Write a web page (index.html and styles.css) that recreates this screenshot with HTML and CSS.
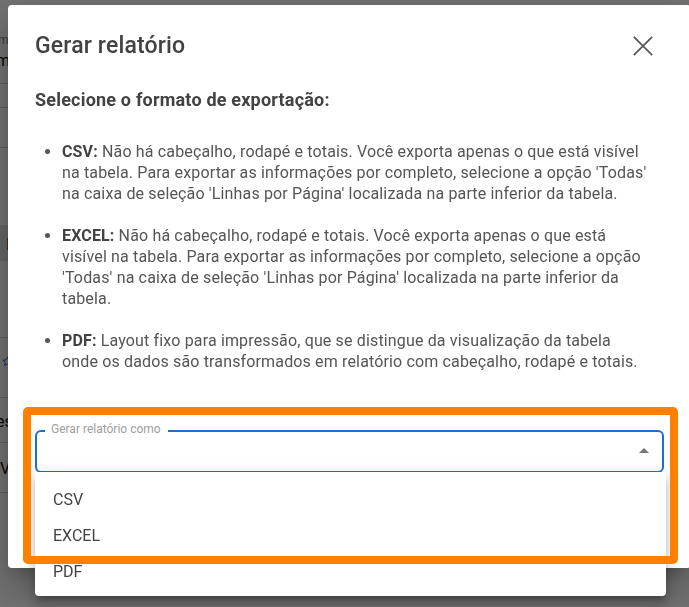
FILE: index.html
```html
<!DOCTYPE html>
<html lang="pt-BR">
<head>
<meta charset="utf-8">
<title>Gerar relatório</title>
<link rel="stylesheet" href="styles.css">
</head>
<body>
<div class="bg-page">
  <div class="bg-block bg-first">
    <span class="bg-caption">m</span>
    <span class="bg-value">m</span>
  </div>
  <div class="bg-block bg-row-24"></div>
  <div class="bg-block bg-row-40"></div>
  <div class="bg-block bg-gap-77"></div>
  <div class="bg-block bg-band"><span class="bg-value">I</span></div>
  <div class="bg-block bg-gap-77b"></div>
  <div class="bg-block bg-star-row">
    <svg class="bg-star" viewBox="0 0 24 24" width="11" height="11"><path d="M12 17.3l-6.2 3.7 1.6-7L2 9.2l7.2-.6L12 2l2.8 6.6 7.2.6-5.4 4.8 1.6 7z" fill="none" stroke="#1e63c6" stroke-width="2"/></svg>
  </div>
  <div class="bg-block bg-text-row"><span class="bg-value">es</span></div>
  <div class="bg-block bg-text-row2"><span class="bg-value">V</span></div>
</div>

<div class="backdrop"></div>

<div class="dialog" role="dialog" aria-labelledby="dlg-title">
  <header class="dialog-header">
    <h2 class="dialog-title" id="dlg-title">Gerar relatório</h2>
    <button class="close-btn" aria-label="Fechar">
      <svg viewBox="0 0 20 20" width="20" height="20"><path d="M0.8 0.8L19.2 19.2M19.2 0.8L0.8 19.2" stroke="#555" stroke-width="1.7" fill="none"/></svg>
    </button>
  </header>
  <div class="dialog-body">
    <p class="subtitle">Selecione o formato de exportação:</p>
    <ul class="formats">
      <li><strong>CSV:</strong> Não há cabeçalho, rodapé e totais. Você exporta apenas o que está visível na tabela. Para exportar as informações por completo, selecione a opção 'Todas' na caixa de seleção 'Linhas por Página' localizada na parte inferior da tabela.</li>
      <li><strong>EXCEL:</strong> Não há cabeçalho, rodapé e totais. Você exporta apenas o que está visível na tabela. Para exportar as informações por completo, selecione a opção 'Todas' na caixa de seleção 'Linhas por Página' localizada na parte inferior da tabela.</li>
      <li><strong>PDF:</strong> Layout fixo para impressão, que se distingue da visualização da tabela onde os dados são transformados em relatório com cabeçalho, rodapé e totais.</li>
    </ul>
    <div class="field">
      <span class="field-label">Gerar relatório como</span>
      <span class="field-arrow"></span>
      <ul class="menu" role="listbox">
        <li class="menu-item">CSV</li>
        <li class="menu-item">EXCEL</li>
        <li class="menu-item">PDF</li>
      </ul>
    </div>
  </div>
</div>

<div class="highlight"></div>
</body>
</html>
```

FILE: styles.css
```css
html, body {
  margin: 0;
  padding: 0;
  width: 689px;
  height: 607px;
  overflow: hidden;
  font-family: Roboto, "Liberation Sans", Arial, sans-serif;
  background: #ffffff;
}

/* ---------- underlying page (mostly hidden) ---------- */
.bg-page {
  width: 689px;
  display: flex;
  flex-direction: column;
}
.bg-block {
  box-sizing: border-box;
  border-bottom: 1px solid #d8d8d8;
  position: relative;
}
.bg-first {
  height: 84px;
  padding-top: 32px;
  display: flex;
  flex-direction: column;
}
.bg-caption {
  font-size: 12px;
  line-height: 16px;
  color: #888;
  margin-left: -2px;
}
.bg-value {
  font-size: 16px;
  line-height: 20px;
  color: #111;
  margin-left: -4px;
  margin-top: 3px;
}
.bg-row-24 { height: 24px; }
.bg-row-40 { height: 40px; }
.bg-gap-77 { height: 77px; border-bottom: 0; }
.bg-band {
  height: 36px;
  background: #e4e4e4;
  border-bottom: 0;
  display: flex;
  align-items: center;
  padding-left: 10px;
}
.bg-gap-77b { height: 77px; }
.bg-star-row {
  height: 60px;
  padding-left: 2px;
  padding-top: 18px;
}
.bg-star { display: block; }
.bg-text-row {
  height: 45px;
  display: flex;
  align-items: center;
}
.bg-text-row2 {
  height: 50px;
  display: flex;
  align-items: center;
  padding-left: 4px;
}

.backdrop {
  position: fixed;
  inset: 0;
  background: rgba(0, 0, 0, 0.55);
}

/* ---------- dialog ---------- */
.dialog {
  position: absolute;
  left: 8px;
  top: 5px;
  width: 683px;
  height: 563px;
  box-sizing: border-box;
  padding: 24px 27px 0 27px;
  background: #ffffff;
  border-radius: 4px;
  box-shadow: 0 11px 15px -7px rgba(0,0,0,.2), 0 24px 38px 3px rgba(0,0,0,.14), 0 9px 46px 8px rgba(0,0,0,.12);
}
.dialog-header {
  display: flex;
  align-items: center;
  justify-content: space-between;
  height: 33px;
}
.dialog-title {
  margin: 0;
  font-size: 23px;
  line-height: 33px;
  font-weight: 500;
  letter-spacing: 0.15px;
  color: #424242;
}
.close-btn {
  border: 0;
  background: transparent;
  padding: 0;
  margin-right: 11px;
  width: 20px;
  height: 20px;
  display: flex;
}

.subtitle {
  margin: 27px 0 0 0;
  font-size: 18px;
  line-height: 22px;
  font-weight: 700;
  letter-spacing: 0.2px;
  color: #424242;
}

.formats {
  margin: 30px 16px 0 0;
  padding: 0 0 0 27px;
  font-size: 16px;
  line-height: 21px;
  letter-spacing: 0.15px;
  color: #555555;
}
.formats li + li { margin-top: 21px; }
.formats strong { font-weight: 700; color: #424242; }

/* ---------- select field ---------- */
.field {
  position: relative;
  margin-top: 58px;
  height: 43px;
  box-sizing: border-box;
  border: 2px solid #1e6fd0;
  border-radius: 6px;
}
.field-label {
  position: absolute;
  left: 8px;
  top: -10px;
  padding: 0 7px 0 6px;
  background: #ffffff;
  font-size: 12px;
  line-height: 14px;
  color: #9e9e9e;
}
.field-arrow {
  position: absolute;
  right: 13px;
  top: 16px;
  width: 0;
  height: 0;
  border-left: 5px solid transparent;
  border-right: 5px solid transparent;
  border-bottom: 5px solid #757575;
}

.menu {
  position: absolute;
  left: -2px;
  right: -4px;
  top: 40px;
  margin: 0;
  padding: 10px 0 6px 0;
  list-style: none;
  background: #ffffff;
  border-radius: 0 0 4px 4px;
  box-shadow: 0 5px 5px -3px rgba(0,0,0,.2), 0 8px 10px 1px rgba(0,0,0,.14), 0 3px 14px 2px rgba(0,0,0,.12);
}
.menu-item {
  height: 36px;
  line-height: 36px;
  padding-left: 18px;
  font-size: 16px;
  color: #424242;
}

/* ---------- annotation ---------- */
.highlight {
  position: absolute;
  left: 23px;
  top: 407px;
  width: 655px;
  height: 157px;
  box-sizing: border-box;
  border: 8px solid #ff8000;
  border-radius: 5px;
}
```
